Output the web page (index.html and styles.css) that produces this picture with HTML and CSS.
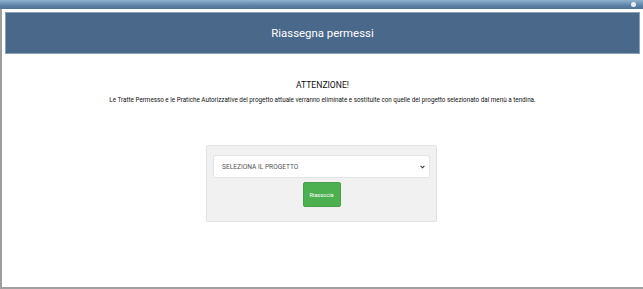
FILE: index.html
```html
<!DOCTYPE html>
<html lang="it">
<head>
<meta charset="utf-8">
<title>Riassegna permessi</title>
<link rel="stylesheet" href="styles.css">
</head>
<body>
<div class="screen">
  <div class="titlebar"><span class="dot"></span></div>
  <div class="window">
    <div class="banner">Riassegna permessi</div>
    <div class="notice">
      <h2 class="notice-title">ATTENZIONE!</h2>
      <p class="notice-text">Le Tratte Permesso e le Pratiche Autorizzative del progetto attuale verranno eliminate e sostituite con quelle del progetto selezionato dal menù a tendina.</p>
    </div>
    <div class="panel">
      <div class="select">
        <span>SELEZIONA IL PROGETTO</span>
        <svg class="chev" width="5" height="4" viewBox="0 0 5 4"><path d="M0.6 0.8 L2.5 2.8 L4.4 0.8" fill="none" stroke="#333" stroke-width="1.1"/></svg>
      </div>
      <button class="btn">Riassocia</button>
    </div>
  </div>
</div>
</body>
</html>
```
FILE: styles.css
```css
html, body {
  margin: 0;
  padding: 0;
}
body {
  width: 643px;
  height: 289px;
  background: #c9c9c9;
  font-family: Roboto, "Liberation Sans", sans-serif;
  overflow: hidden;
}
.screen {
  display: flex;
  flex-direction: column;
  height: 289px;
}
.titlebar {
  height: 9px;
  background: linear-gradient(#8fb2cf, #5e82a6 60%, #4f7298);
  position: relative;
  flex: none;
}
.dot {
  position: absolute;
  right: 7px;
  top: 2px;
  width: 5px;
  height: 5px;
  border-radius: 50%;
  background: #e8eef4;
}
.window {
  width: 637px;
  height: 277px;
  background: #fff;
  border-left: 2px solid #9e9e9e;
  border-right: 1px solid #a8a8a8;
  border-bottom: 2px solid #a0a0a0;
  padding: 3px 2px 0 2px;
  box-sizing: content-box;
  display: flex;
  flex-direction: column;
  align-items: center;
}
.banner {
  width: 633px;
  height: 40px;
  background: #4a6889;
  border: 1px solid #8aa0b8;
  box-sizing: content-box;
  color: #fff;
  font-size: 11.4px;
  display: flex;
  align-items: center;
  justify-content: center;
}
.notice {
  display: flex;
  flex-direction: column;
  align-items: center;
  margin-top: 26px;
}
.notice-title {
  margin: 0;
  font-size: 8.6px;
  font-weight: 400;
  color: #111;
  line-height: 11px;
}
.notice-text {
  margin: 5px 0 0 0;
  font-size: 6.3px;
  color: #111;
  line-height: 9px;
  white-space: nowrap;
}
.panel {
  margin-top: 40px;
  margin-right: 2px;
  width: 231px;
  height: 77px;
  background: #f1f1f1;
  border: 1px solid #e2e2e2;
  border-radius: 2px;
  display: flex;
  flex-direction: column;
  align-items: center;
  padding-top: 9px;
  box-sizing: border-box;
}
.select {
  width: 217px;
  height: 23px;
  background: #fff;
  border: 1px solid #e4e4e4;
  border-radius: 2px;
  box-sizing: border-box;
  display: flex;
  align-items: center;
  justify-content: space-between;
  padding: 0 4px 0 8px;
  font-size: 6.6px;
  color: #555;
}
.chev {
  display: block;
}
.btn {
  margin-top: 4px;
  width: 38px;
  height: 25px;
  background: #4caf50;
  border: 1px solid #46a049;
  border-radius: 2px;
  color: #fff;
  font-family: Roboto, "Liberation Sans", sans-serif;
  font-size: 5.6px;
  padding: 0;
}
```
